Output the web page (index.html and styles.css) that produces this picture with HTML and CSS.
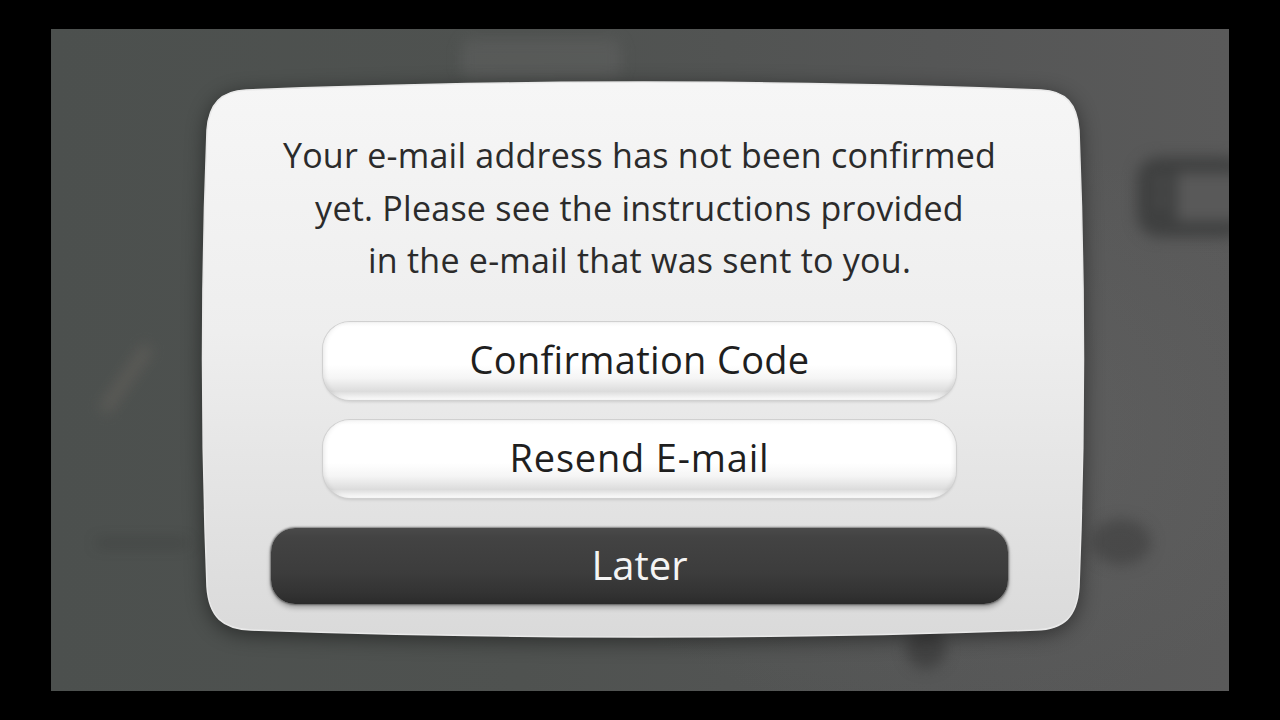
FILE: index.html
```html
<!DOCTYPE html>
<html lang="en">
<head>
<meta charset="utf-8">
<title>E-mail not confirmed</title>
<link rel="stylesheet" href="styles.css">
</head>
<body>
<div class="screen">
  <div class="bg-art bg-top"></div>
  <div class="bg-art bg-pad"><div class="bg-pad-screen"></div><div class="bg-pad-dot d1"></div><div class="bg-pad-dot d2"></div></div>
  <div class="bg-art bg-stroke"></div>
  <div class="bg-art bg-line"></div>
  <div class="bg-art bg-blob"></div>
  <div class="bg-art bg-blob2"></div>

  <div class="dialog">
    <svg class="dialog-shape" viewBox="0 0 879 555" width="879" height="555" preserveAspectRatio="none" aria-hidden="true">
      <defs>
        <linearGradient id="dlgFill" x1="0" y1="0" x2="0" y2="1">
          <stop offset="0" stop-color="#f6f6f6"/>
          <stop offset="0.45" stop-color="#eeeeee"/>
          <stop offset="1" stop-color="#dadada"/>
        </linearGradient>
      </defs>
      <path d="M42 8 Q439.5 -8 837 8 C862 9 873 22 875 48 Q884 277.5 875 505 C873 535 860 547 832 548 Q439.5 562 47 548 C19 547 5 535 3 505 Q-6 277.5 3 48 C5 22 17 9 42 8 Z" fill="url(#dlgFill)" stroke="#e9e9e9" stroke-width="1.5"/>
    </svg>
    <div class="dialog-body">
      <p class="message">Your e-mail address has not been confirmed<br>yet. Please see the instructions provided<br>in the e-mail that was sent to you.</p>
      <div class="options">
        <button class="btn btn-light">Confirmation Code</button>
        <button class="btn btn-light btn-resend">Resend E-mail</button>
      </div>
      <button class="btn btn-dark">Later</button>
    </div>
  </div>
</div>
</body>
</html>
```
FILE: styles.css
```css
html, body {
  margin: 0;
  height: 100%;
}
body {
  background: #000;
  padding: 29px 51px;
  box-sizing: border-box;
  font-family: "Open Sans", "Noto Sans", "Liberation Sans", sans-serif;
}
.screen {
  position: relative;
  width: 1178px;
  height: 662px;
  overflow: hidden;
  background:
    radial-gradient(ellipse 600px 420px at 75% 60%, rgba(110,110,110,0.3), rgba(110,110,110,0) 70%),
    linear-gradient(90deg, #4c504e 0%, #4f5250 40%, #555656 75%, #5a5a5a 100%);
  box-sizing: border-box;
  padding: 53px 0 0 153px;
}

/* blurred background art */
.bg-art {
  position: absolute;
  filter: blur(7px);
}
.bg-top {
  left: 410px; top: 10px; width: 160px; height: 40px;
  background: rgba(110,110,110,0.3);
  border-radius: 10px;
}
.bg-pad {
  left: 1086px; top: 128px; width: 110px; height: 80px;
  background: #3f4040;
  border-radius: 22px;
}
.bg-pad-screen {
  position: absolute;
  left: 40px; top: 16px; width: 70px; height: 48px;
  background: #595959;
  border-radius: 4px;
}
.bg-pad-dot {
  position: absolute;
  left: 20px; width: 8px; height: 8px;
  border-radius: 50%;
  background: #595959;
}
.bg-pad-dot.d1 { top: 22px; }
.bg-pad-dot.d2 { top: 40px; }
.bg-stroke {
  left: 70px; top: 310px; width: 10px; height: 80px;
  background: rgba(115,108,100,0.45);
  transform: rotate(35deg);
  border-radius: 6px;
}
.bg-line {
  left: 46px; top: 512px; width: 90px; height: 4px;
  background: rgba(40,40,40,0.55);
}
.bg-blob {
  left: 1040px; top: 490px; width: 60px; height: 46px;
  background: rgba(50,50,50,0.45);
  border-radius: 50%;
}
.bg-blob2 {
  left: 855px; top: 600px; width: 40px; height: 40px;
  background: rgba(50,50,50,0.55);
  border-radius: 50%;
}

/* dialog */
.dialog {
  position: relative;
  width: 879px;
  height: 555px;
}
.dialog-shape {
  position: absolute;
  left: 0; top: 0;
  overflow: visible;
  filter: drop-shadow(0 4px 10px rgba(0,0,0,0.45));
}
.dialog-body {
  position: relative;
  display: flex;
  flex-direction: column;
  align-items: center;
  padding: 47px 8px 0 0;
}
.message {
  margin: 0;
  text-align: center;
  font-size: 34px;
  font-weight: 500;
  line-height: 52.5px;
  color: #2b2b2b;
  letter-spacing: 0.25px;
}
.options {
  margin-top: 35px;
  display: flex;
  flex-direction: column;
  gap: 20px;
}
.btn {
  font-family: inherit;
  font-weight: 500;
  border: none;
  padding: 0;
  display: flex;
  align-items: center;
  justify-content: center;
  cursor: pointer;
}
.btn-light {
  width: 633px;
  height: 78px;
  border-radius: 27px;
  font-size: 38px;
  letter-spacing: 0.3px;
  color: #1f1f1f;
  background: linear-gradient(to bottom, #f5f5f5 0%, #ffffff 6%, #ffffff 55%, #f5f5f5 72%, #dcdcdc 89%, #f1f1f1 96%, #fbfbfb 100%);
  box-shadow:
    0 0 0 1px #d0d0d0,
    0 2px 3px rgba(0,0,0,0.12),
    inset 4px 0 5px -3px rgba(0,0,0,0.1),
    inset -4px 0 5px -3px rgba(0,0,0,0.1);
  padding-bottom: 4px;
}
.btn-resend {
  letter-spacing: 0.8px;
}
.btn-dark {
  margin-top: 30px;
  width: 737px;
  height: 76px;
  border-radius: 24px;
  font-size: 40px;
  color: #f4f4f4;
  background: linear-gradient(to bottom, #4a4a4a 0%, #434343 12%, #3c3c3c 60%, #333 85%, #2b2b2b 100%);
  box-shadow:
    0 0 2px 1px rgba(0,0,0,0.45),
    0 4px 5px rgba(0,0,0,0.25);
  padding-bottom: 2px;
}
```
